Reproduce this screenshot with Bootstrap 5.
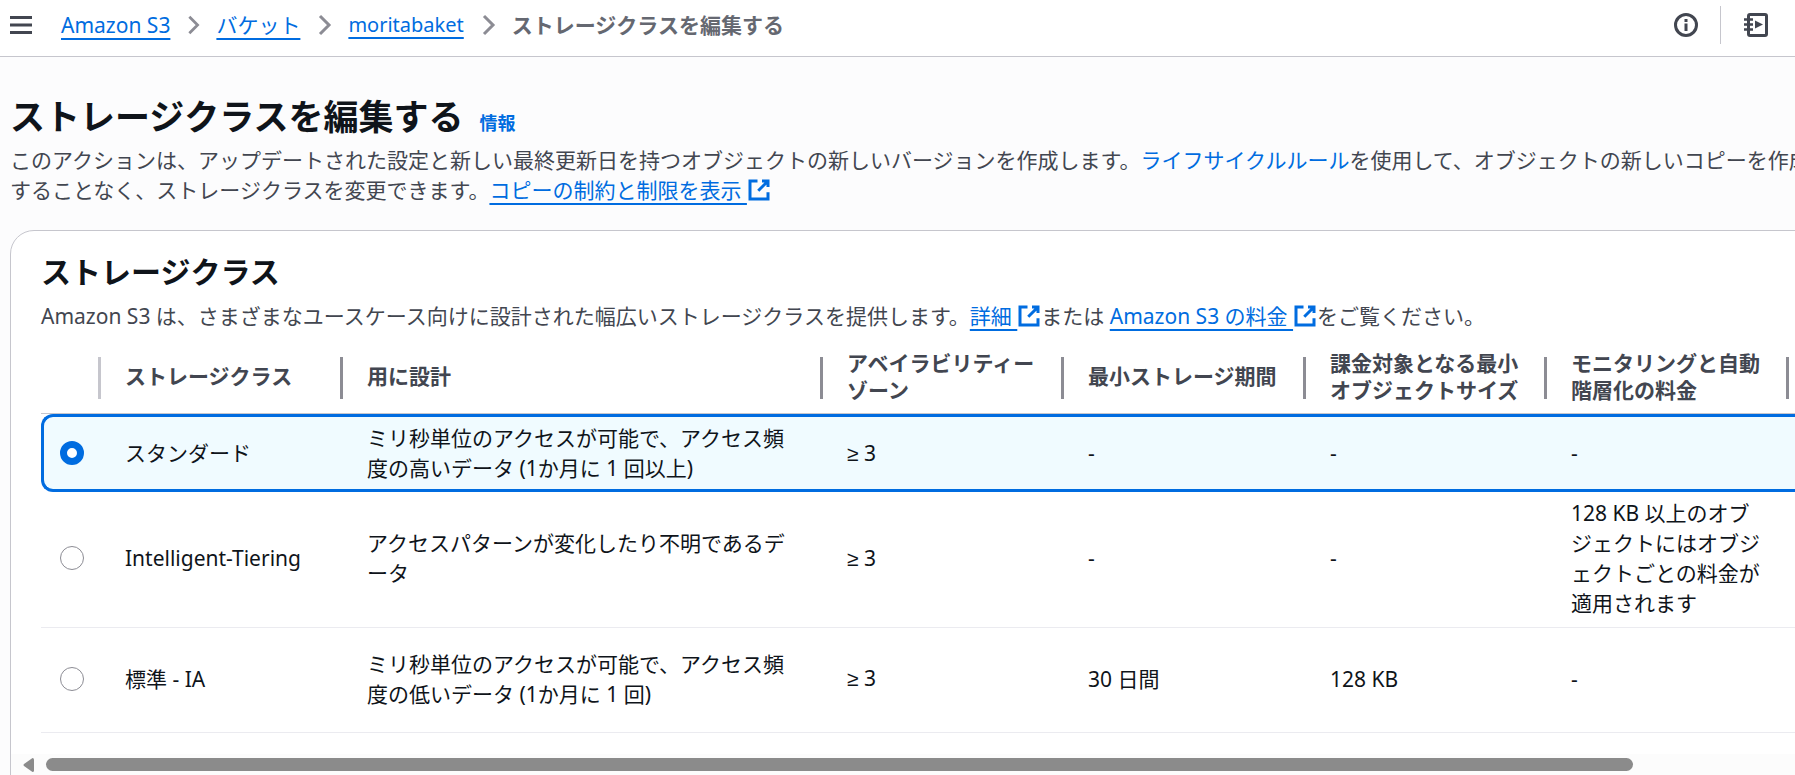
<!DOCTYPE html>
<html lang="ja">
<head>
<meta charset="utf-8">
<meta name="viewport" content="width=device-width, initial-scale=1">
<title>ストレージクラスを編集する</title>
<link rel="stylesheet" href="https://cdn.jsdelivr.net/npm/bootstrap@5.3.0/dist/css/bootstrap.min.css">
<style>
  body { font-family: "Noto Sans", "Noto Sans CJK JP", sans-serif; font-size: 21px; line-height: 30px; color: #0f141a; background: #fcfcfd; height: 100vh; overflow: hidden; }
  a { color: #006ce0; text-decoration: none; }
  a.lined { text-decoration: underline; text-decoration-thickness: 2px; text-underline-offset: 5px; text-decoration-skip-ink: none; }
  svg { fill: none; stroke: currentColor; }
  .latin { font-size: 20px; }
  .math { font-family: "Liberation Sans", sans-serif; }
  .topbar { height: 57px; padding: 0 27px 7px 9px; border-bottom: 1px solid #c6c6cd; color: #424650; }
  .crumbs { gap: 12px; margin-left: 28px; }
  .crumbs .sep { color: #8c8c94; }
  .crumbs .here { color: #656871; font-weight: 700; }
  .rule { width: 1px; height: 38px; background: #c6c6cd; margin: 0 23px 0 22px; }
  .page { padding: 37px 0 0 10px; margin-right: -24px; }
  h1 { font-size: 35px; line-height: 45px; font-weight: 700; }
  .info { font-size: 18px; font-weight: 700; }
  .muted { color: #424650; }
  .lead-in { margin: 6px 0 25px; }
  .ext { width: 24px; height: 24px; vertical-align: -4px; stroke-width: 2; }
  .panel { background: #fff; border: 1px solid #c6c6cd; border-radius: 24px; padding: 22px 0 40px; }
  .panel .inset { padding-left: 30px; }
  h2 { font-size: 30px; line-height: 38px; font-weight: 700; margin-bottom: 10px; }
  .wide { overflow: hidden; margin-top: 10px; }
  .classes { table-layout: fixed; width: 2000px; border-collapse: separate; border-spacing: 0; }
  .classes th { position: relative; height: 73px; line-height: 27px; padding: 0 24px 1px; color: #424650; border-bottom: 1px solid #c6c6cd; vertical-align: middle; }
  .classes th::after { content: ""; position: absolute; right: 0; top: 16px; width: 3px; height: 42px; background: #8c8c94; }
  .classes th:first-child::after { background: #c6c6cd; }
  .classes td { padding: 6px 24px 9px; border-bottom: 1px solid #ebebf0; vertical-align: middle; }
  .classes td:first-child, .classes th:first-child { padding-left: 19px; padding-right: 0; }
  .classes .tall td { height: 105px; }
  .classes .picked td { padding-top: 6px; padding-bottom: 6px; background: #f0fbff; border-top: 3px solid #006ce0; border-bottom: 3px solid #006ce0; }
  .classes .picked td:first-child { border-left: 3px solid #006ce0; border-radius: 12px 0 0 12px; padding-left: 16px; }
  .classes .form-check-input { display: block; width: 24px; height: 24px; margin: 0; border: 1px solid #8c8c94; background: #fff; }
  .classes .form-check-input:checked { border: 7px solid #006ce0; }
  .c-pick { width: 60px; } .c-std { width: 242px; } .c-use { width: 480px; } .c-mid { width: 241px; }
  .scrollrow { height: 21px; margin-top: 21px; padding-left: 12px; gap: 12px; background: #fcfcfc; }
  .scrollrow .arrow { width: 11px; height: 14px; fill: #8b8b8b; stroke: none; }
  .scrollrow .thumb { height: 13px; border-radius: 7px; background: #8b8b8b; }
</style>
<script src="https://cdn.jsdelivr.net/npm/bootstrap@5.3.0/dist/js/bootstrap.bundle.min.js"></script>
</head>
<body>
<svg class="d-none">
  <symbol id="ext" viewBox="0 0 16 16"><path d="M10 2h4v4M7.500 8.500L14 2M14 9.500V14H2V2h5"/></symbol>
  <symbol id="chev" viewBox="0 0 24 24"><path d="M8 3l9 9-9 9" stroke-width="3"/></symbol>
</svg>

<header class="topbar d-flex align-items-center bg-white">
  <button type="button" class="btn p-0 border-0 lh-1 muted" aria-label="メニュー">
    <svg class="d-block" width="24" height="24" viewBox="0 0 24 24" stroke-width="3"><path d="M1 4.500h22M1 12h22M1 19.500h22"/></svg>
  </button>
  <nav class="crumbs d-flex align-items-center text-nowrap" aria-label="パンくずリスト">
    <a class="lined" href="#">Amazon S3</a>
    <svg class="sep" width="22" height="24"><use href="#chev"/></svg>
    <a class="lined" href="#">バケット</a>
    <svg class="sep" width="24" height="24"><use href="#chev"/></svg>
    <a class="lined latin" href="#">moritabaket</a>
    <svg class="sep" width="24" height="24"><use href="#chev"/></svg>
    <span class="here">ストレージクラスを編集する</span>
  </nav>
  <div class="d-flex align-items-center ms-auto">
    <button type="button" class="btn p-0 border-0 muted" aria-label="情報">
      <svg class="d-block" width="24" height="24" viewBox="0 0 24 24" stroke-width="3"><circle cx="12" cy="12" r="10.500"/><path d="M12 10.500V18M12 6v3"/></svg>
    </button>
    <span class="rule"></span>
    <button type="button" class="btn p-0 border-0 muted" aria-label="チュートリアル">
      <svg class="d-block" width="24" height="24" viewBox="0 0 24 24"><rect x="4.500" y="1.500" width="18" height="21" rx="1.500" stroke-width="3"/><path d="M0 6.500h9M0 11.500h9M0 16.500h9" stroke-width="2.500"/><path d="M11 7.500v8l8-4z" fill="currentColor" stroke="none"/></svg>
    </button>
  </div>
</header>

<main class="page">
  <div class="d-flex align-items-baseline">
    <h1 class="mb-0 me-3">ストレージクラスを編集する</h1>
    <a class="info" href="#">情報</a>
  </div>
  <p class="lead-in muted">このアクションは、アップデートされた設定と新しい最終更新日を持つオブジェクトの新しいバージョンを作成します。<a href="#">ライフサイクルルール</a>を使用して、オブジェクトの新しいコピーを作成することなく、ストレージクラスを変更できます。<a class="lined" href="#">コピーの制約と制限を表示 <svg class="ext"><use href="#ext"/></svg></a></p>

  <section class="panel">
    <div class="inset">
      <h2>ストレージクラス</h2>
      <p class="muted mb-0">Amazon S3 は、さまざまなユースケース向けに設計された幅広いストレージクラスを提供します。<a class="lined" href="#">詳細 <svg class="ext"><use href="#ext"/></svg></a>または <a class="lined" href="#">Amazon S3 の料金 <svg class="ext"><use href="#ext"/></svg></a>をご覧ください。</p>
      <div class="wide">
        <table class="classes">
          <colgroup><col class="c-pick"><col class="c-std"><col class="c-use"><col class="c-mid"><col class="c-std"><col class="c-mid"><col class="c-std"><col></colgroup>
          <thead>
            <tr><th></th><th scope="col">ストレージクラス</th><th scope="col">用に設計</th><th scope="col">アベイラビリティーゾーン</th><th scope="col">最小ストレージ期間</th><th scope="col">課金対象となる最小オブジェクトサイズ</th><th scope="col">モニタリングと自動階層化の料金</th><th></th></tr>
          </thead>
          <tbody>
            <tr class="picked">
              <td><input class="form-check-input" type="radio" name="cls" id="std" checked></td>
              <td><label for="std">スタンダード</label></td>
              <td>ミリ秒単位のアクセスが可能で、アクセス頻度の高いデータ (1か月に 1 回以上)</td>
              <td><span class="math">≥</span> 3</td><td>-</td><td>-</td><td>-</td><td></td>
            </tr>
            <tr>
              <td><input class="form-check-input" type="radio" name="cls" id="int"></td>
              <td><label for="int">Intelligent-Tiering</label></td>
              <td>アクセスパターンが変化したり不明であるデータ</td>
              <td><span class="math">≥</span> 3</td><td>-</td><td>-</td><td>128 KB 以上のオブジェクトにはオブジェクトごとの料金が適用されます</td><td></td>
            </tr>
            <tr class="tall">
              <td><input class="form-check-input" type="radio" name="cls" id="ia"></td>
              <td><label for="ia">標準 - IA</label></td>
              <td>ミリ秒単位のアクセスが可能で、アクセス頻度の低いデータ (1か月に 1 回)</td>
              <td><span class="math">≥</span> 3</td><td>30 日間</td><td>128 KB</td><td>-</td><td></td>
            </tr>
          </tbody>
        </table>
      </div>
    </div>
    <div class="scrollrow d-flex align-items-center">
      <svg class="arrow" viewBox="0 0 11 14"><path d="M9.500 0Q11 0 11 1.500v11Q11 14 9.500 14L1 8Q0 7 1 6z"/></svg>
      <div class="thumb" style="width:88.4%"></div>
    </div>
  </section>
</main>
</body>
</html>
